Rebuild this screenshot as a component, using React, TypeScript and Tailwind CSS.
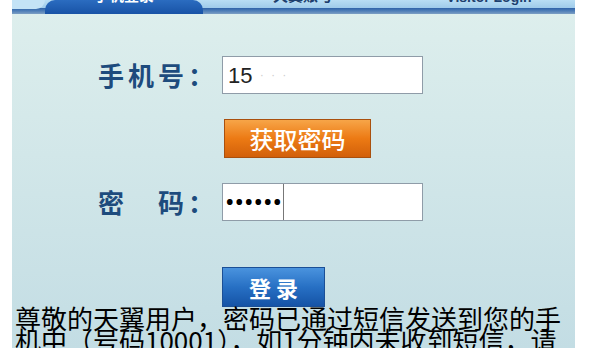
const cjk = "font-['Noto_Sans_CJK_SC','Noto_Sans',sans-serif]";

function NavBar() {
  return (
    <div className="relative h-[14px] overflow-hidden bg-[linear-gradient(to_bottom,#b9def4_0px,#9fcbea_8px,#2f63a8_8px,#4f7fb8_11px,#7d9fc4_14px)]">
      <div className="flex h-full">
        <div className="w-[33px] h-[9px] rounded-br-[10px] bg-[#c4e3f6]" />
        <div className="w-[158px] h-[14px] rounded-t-[10px] bg-[linear-gradient(to_bottom,#2b6cc0,#1853a6)] flex justify-center">
          <span className={`${cjk} -mt-[13px] text-[15px] font-bold leading-none text-white`}>手机登录</span>
        </div>
        <div className="w-[200px] flex justify-center">
          <span className={`${cjk} -mt-[13px] text-[15px] font-bold leading-none text-[#1d3f6e]`}>天翼账号</span>
        </div>
        <div className="flex-1 flex justify-center">
          <span className="font-['Liberation_Sans',sans-serif] -mt-[10px] text-[14px] font-bold leading-none text-[#1d3f6e]">
            Visitor Login
          </span>
        </div>
      </div>
    </div>
  );
}

function Label({ text }: { text: string }) {
  return (
    <div className={`${cjk} w-[125px] pl-[1px] text-[26px] font-bold tracking-[4px] text-[#1d4b7d] leading-none`}>
      {text}
    </div>
  );
}

export default function App() {
  return (
    <div className="w-[600px] h-[348px] bg-white overflow-hidden">
      <div className="ml-[12px] w-[563px] h-[348px] overflow-hidden bg-[linear-gradient(to_bottom,#deefed,#c3dde4)]">
        <NavBar />

        <div className="flex flex-col pl-[85px]">
          <div className="mt-[42px] flex items-center">
            <Label text="手机号：" />
            <div className="w-[201px] h-[38px] border border-[#8f9ca8] bg-white flex items-center pl-[5px]">
              <span className="font-['Liberation_Sans',sans-serif] text-[22px] text-[#222]">15</span>
              <span className="ml-[8px] text-[10px] text-[#ccc] tracking-[3px]">· · ·</span>
            </div>
          </div>

          <div className="mt-[25px] ml-[127px]">
            <button className={`${cjk} w-[147px] h-[39px] border border-[#a9500e] bg-[linear-gradient(to_bottom,#f7a548,#ec7a14_50%,#d2600a)] text-white text-[24px] font-medium leading-none`}>
              获取密码
            </button>
          </div>

          <div className="mt-[25px] flex items-center">
            <Label text="密　码：" />
            <div className="w-[201px] h-[38px] border border-[#8f9ca8] bg-white flex items-center">
              <span className="pl-[3px] text-[20px] font-bold tracking-[2px] leading-none text-black">••••••</span>
              <div className="w-px h-full bg-[#777]" />
            </div>
          </div>

          <div className="mt-[46px] ml-[125px]">
            <button className={`${cjk} w-[103px] h-[40px] border border-[#1b4f96] bg-[linear-gradient(to_bottom,#4a93de,#2770c4_50%,#1553a6)] text-white text-[22px] font-bold leading-none`}>
              登 录
            </button>
          </div>
        </div>

        <p className={`${cjk} pl-[3px] text-[26px] leading-[22px] text-black whitespace-nowrap`}>
          尊敬的天翼用户，密码已通过短信发送到您的手
          <br />
          机中（号码10001），如1分钟内未收到短信，请
        </p>
      </div>
    </div>
  );
}
